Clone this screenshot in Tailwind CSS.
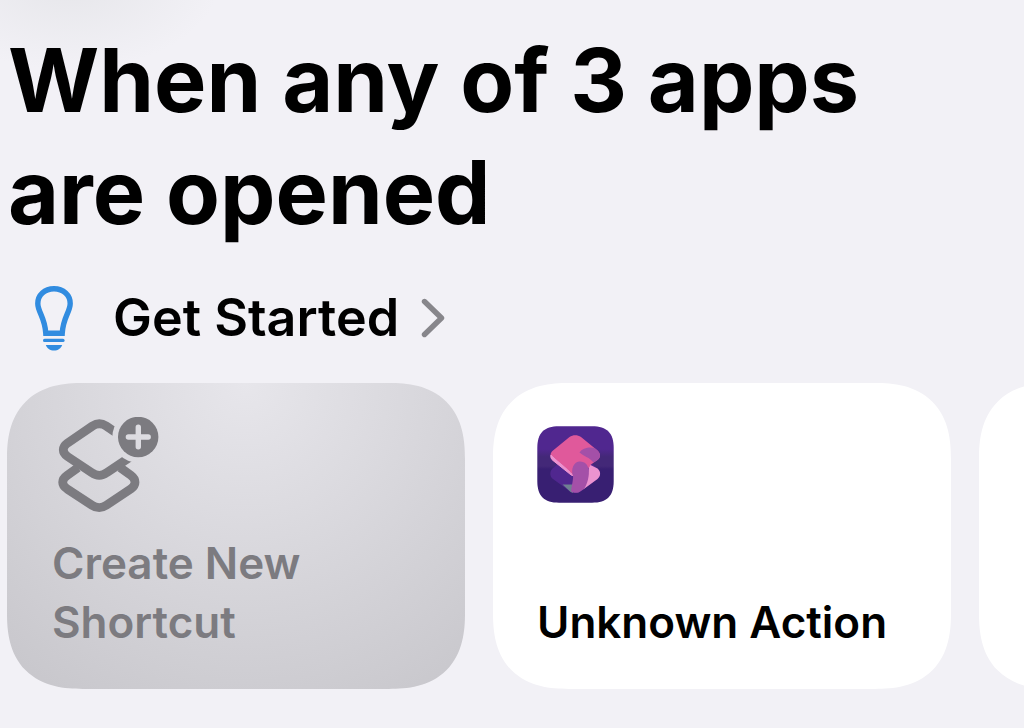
<!DOCTYPE html>
<html lang="en">

<head>
    <meta charset="UTF-8">
    <meta name="viewport" content="width=device-width, initial-scale=1.0">
    <title>Automation</title>
    <script src="https://cdn.jsdelivr.net/npm/@tailwindcss/browser@4"></script>
</head>

<body class="min-h-screen bg-[#f2f1f6] bg-[radial-gradient(ellipse_150px_90px_at_70px_-20px,#e6e6ea,#f2f1f6)] font-['Inter',sans-serif] text-black">

    <main class="pt-6 pb-10">

        <!-- Title -->
        <h1 class="max-w-[920px] px-2 text-[88px] leading-[112px] font-bold">When any of 3 apps are opened</h1>

        <!-- Get Started link -->
        <a href="#" class="mt-[30px] flex h-20 w-fit items-center pl-[35px]">
            <svg class="h-[65px] w-[38px]" viewBox="0 0 38 65" fill="none" aria-hidden="true">
                <path d="M19 2.8C9.5 2.8 2.8 9.3 2.8 17.5C2.8 26 9.8 31 10.8 47.3H27.2C28.2 31 35.2 26 35.2 17.5C35.2 9.3 28.5 2.8 19 2.8Z" stroke="#318ce0" stroke-width="5.4" />
                <path d="M9.6 54.4H28" stroke="#318ce0" stroke-width="3.2" stroke-linecap="round" />
                <path d="M10.8 59H27.2C26 62.5 23 64.5 19 64.5S12 62.5 10.8 59Z" fill="#318ce0" />
            </svg>
            <span class="ml-10 text-[52px] leading-[64px] font-semibold">Get Started</span>
            <svg class="ml-[22px] h-10 w-6" viewBox="0 0 24 40" fill="none" aria-hidden="true">
                <path d="M3.5 3.5L20.5 20L3.5 36.5" stroke="#87868b" stroke-width="5.4" stroke-linecap="round" stroke-linejoin="round" />
            </svg>
        </a>

        <!-- Cards, scrolled sideways -->
        <div class="mt-[25px] flex gap-7 overflow-x-auto px-[7px] [scrollbar-width:none]">

            <button type="button" class="flex h-[306px] w-[458px] shrink-0 flex-col items-start justify-between rounded-[76px] bg-[radial-gradient(circle_at_52%_0%,#e7e6eb,#c8c7cc_370px)] px-[45px] pt-[34px] pb-[37px] text-left text-[44px] leading-[59px] font-semibold text-[#7c7b80] [corner-shape:superellipse(1.3)]">
                <svg class="ml-1.5 h-24 w-[102px]" viewBox="0 0 102 96" fill="none" aria-hidden="true">
                    <mask id="badgeCut">
                        <rect width="102" height="96" fill="#fff" />
                        <circle cx="80" cy="20" r="25.7" fill="#000" />
                    </mask>
                    <mask id="plusCut">
                        <rect width="102" height="96" fill="#fff" />
                        <path d="M70.4 20H90.2M80.3 10.3V29.8" stroke="#000" stroke-width="5.4" stroke-linecap="round" />
                    </mask>
                    <g stroke="#7c7b80" stroke-width="8.8">
                        <path mask="url(#badgeCut)" d="M34.5 9L9.5 26C3.9 30 3.9 35.6 9.5 39.5L34 55.8C38.5 59.2 44 59.2 48.5 55.8L73 39.5C78.6 35.6 78.6 30 73 26L48.2 9C44 6.3 38.7 6.3 34.5 9Z" />
                        <path d="M20 50.6L9.2 58.3C3.2 62.5 3.2 67.8 9.2 72L34 88.2C38.5 91.2 44 91.2 48.5 88.2L72.8 72C78.4 67.8 78.4 62.5 72.8 58.3L62.2 50.6" />
                    </g>
                    <circle mask="url(#plusCut)" cx="80.2" cy="20" r="20.2" fill="#7c7b80" />
                </svg>
                <span>Create New<br>Shortcut</span>
            </button>

            <button type="button" class="flex h-[306px] w-[458px] shrink-0 flex-col items-start justify-between rounded-[76px] bg-white px-[44px] pt-[43px] pb-[37px] text-left text-[44px] leading-[59px] font-semibold [corner-shape:superellipse(1.3)]">
                <svg class="h-[77px] w-[77px]" viewBox="0 0 77 77" aria-hidden="true">
                    <defs>
                        <linearGradient id="tile" x1="0" y1="0" x2="0" y2="1">
                            <stop offset=".3" stop-color="#50278f" />
                            <stop offset=".4" stop-color="#432878" />
                            <stop offset=".52" stop-color="#432878" />
                            <stop offset=".56" stop-color="#381f72" />
                        </linearGradient>
                    </defs>
                    <path d="M22 0.3H55C70 0.3 76.7 7 76.7 22V55C76.7 70 70 76.7 55 76.7H22C7 76.7 0.3 70 0.3 55V22C0.3 7 7 0.3 22 0.3Z" fill="url(#tile)" />
                    <!-- lower layer -->
                    <path d="M21 38L15.5 42.5C12.5 45.5 12.5 50.5 16 53L32.5 65C36 67.6 40.5 67.6 44 65L60.5 53C64 50 64 45.5 60.5 42.5L55 38Z" fill="#50278f" />
                    <path d="M25.5 58.5H36V67C34.5 66.5 33.5 66 32.5 65Z" fill="#6f7f92" />
                    <path d="M52.5 38.5L60.5 42.5C64 45.5 64 50 60.5 53L46.5 63.2L50 52Z" fill="#ec93d0" />
                    <!-- upper layer -->
                    <path d="M32.5 11C36 8.6 40.5 8.6 44 11L60.5 24.5C63.8 27.5 63.8 31.5 60.5 34L54 38.5L46 50L36 50L16 34.5C12.7 32 12.7 27 16 24.5Z" fill="#e0599b" />
                    <path d="M14 29C17.5 33.5 30 42 36 49.5L34.5 49.3L16 34.5C14 33 13.5 31 14 29Z" fill="#ec93d0" stroke="#ec93d0" />
                    <path d="M42.5 26.5C45 22 53 20.5 57.5 22L60.5 24.5C63.8 27.5 63.8 31.5 60.5 34L56.5 36.5C52 31 48 31 42.5 26.5Z" fill="#a450a8" />
                    <path d="M36 50C33.5 43 37 36 42 35.5C48 35 50.5 39 51.5 42.5C53 49 50 59 47 63L44 65C41.5 67.3 37 67.5 34.2 65.5C34 62 36.5 54 36 50Z" fill="#a450a8" />
                </svg>
                <span>Unknown Action</span>
            </button>

            <button type="button" aria-label="Next action" class="h-[306px] w-[458px] shrink-0 rounded-[76px] bg-white [corner-shape:superellipse(1.3)]"></button>
        </div>

    </main>

</body>

</html>
